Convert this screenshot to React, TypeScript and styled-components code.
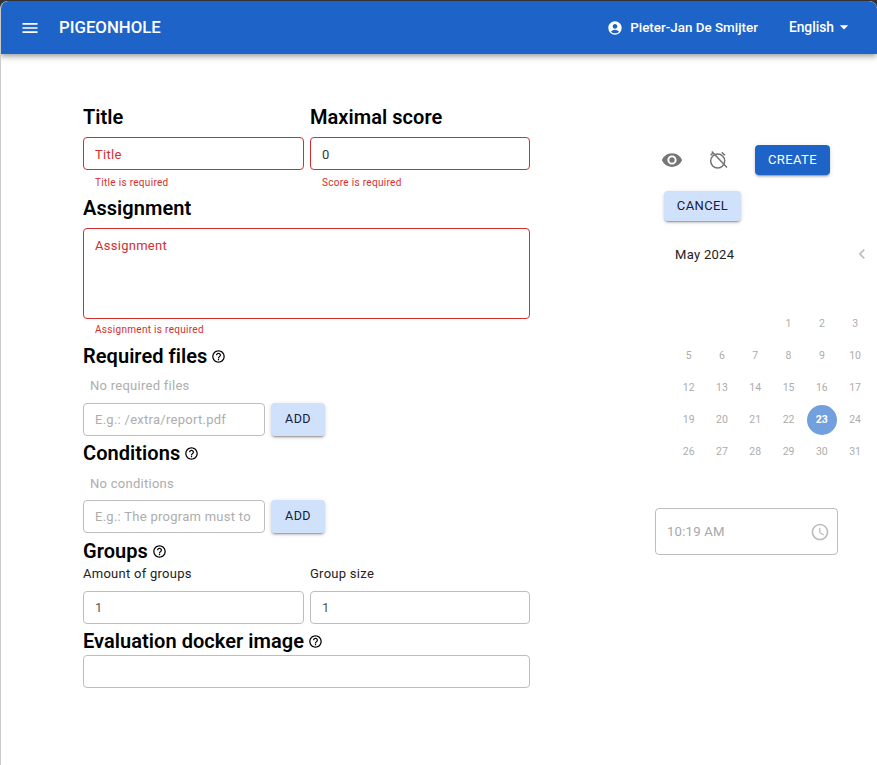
import React from 'react';
import styled, { createGlobalStyle } from 'styled-components';
import {
    MdAccessTime,
    MdAccountCircle,
    MdArrowDropDown,
    MdChevronLeft,
    MdHelpOutline,
    MdMenu,
    MdVisibility,
} from 'react-icons/md';

const GlobalStyle = createGlobalStyle`
    html, body {
        margin: 0;
        height: 100%;
        overflow: hidden;
        background: #333;
    }
    body, input, textarea, button {
        font-family: Roboto, "Liberation Sans", sans-serif;
    }
    * {
        box-sizing: border-box;
    }
`;

const Screen = styled.div`
    height: 765px;
    width: 877px;
    padding-top: 1px;
    overflow: hidden;
`;

const Page = styled.div`
    height: 764px;
    background: #fff;
    border-left: 1px solid #ccc;
    border-radius: 8px 8px 0 0;
    overflow: hidden;
`;

const Toolbar = styled.header`
    height: 53px;
    margin-left: -1px;
    background: #1e64c8;
    color: #fff;
    display: flex;
    align-items: center;
    padding: 0 23px 0 20px;
    border-radius: 8px 8px 0 0;
    box-shadow: 0 2px 4px -1px rgba(0, 0, 0, 0.2), 0 4px 5px rgba(0, 0, 0, 0.14), 0 1px 10px rgba(0, 0, 0, 0.12);
    position: relative;
`;

const Brand = styled.div`
    margin-left: 19px;
    padding-bottom: 1px;
    font-size: 16.8px;
    font-weight: 500;
    flex: 1;
`;

const UserName = styled.div`
    display: flex;
    align-items: center;
    gap: 7px;
    font-size: 13.4px;
    font-weight: 500;
`;

const LanguageButton = styled.div`
    display: flex;
    align-items: center;
    margin-left: 31px;
    padding-bottom: 1px;
    font-size: 13.8px;
    font-weight: 500;
`;

const Content = styled.main`
    display: flex;
    padding-left: 82px;
`;

const FormColumn = styled.form`
    width: 447px;
    padding-top: 50px;
    flex: none;
`;

const SideColumn = styled.aside`
    margin-left: 125px;
    padding-top: 91px;
    width: 240px;
    flex: none;
`;

const TwoColumns = styled.div`
    display: grid;
    grid-template-columns: 221px 220px;
    gap: 6px;
`;

const Heading = styled.h2`
    margin: 0;
    display: flex;
    align-items: center;
    gap: 4px;
    height: 26px;
    font-size: 20px;
    font-weight: 600;
    letter-spacing: 0.05px;
    color: #000;
`;

const GroupsSection = styled.section`
    margin-top: 1px;
`;

const Field = styled.div<{ $invalid?: boolean; $tall?: boolean }>`
    height: ${(p) => (p.$tall ? '91px' : '33px')};
    margin-top: 7px;
    border: 1px solid ${(p) => (p.$invalid ? '#d32f2f' : '#bdbdbd')};
    border-radius: 4px;
    padding: ${(p) => (p.$tall ? '9px 11px' : p.$invalid ? '3px 11px 0' : '1px 11px 0')};
    display: flex;
    align-items: ${(p) => (p.$tall ? 'flex-start' : 'center')};
    font-size: 13px;
    letter-spacing: 0.27px;
    line-height: 16px;
    background: #fff;
`;

const DockerField = styled(Field)`
    margin-top: 1px;
`;

const FieldText = styled.span<{ $tone: 'error' | 'value' | 'hint' | 'count' }>`
    color: ${(p) => ({ error: '#d32f2f', value: '#333', count: '#555', hint: '#adadad' }[p.$tone])};
`;

const HelperText = styled.div`
    height: 25px;
    padding: 7px 12px 0;
    font-size: 10px;
    line-height: 12px;
    letter-spacing: 0.3px;
    color: #d32f2f;
`;

const AssignmentHelper = styled(HelperText)`
    height: 24px;
    padding-top: 5px;
`;

const EmptyNote = styled.div<{ $top: number }>`
    height: 34px;
    padding: ${(p) => p.$top}px 7px 0;
    font-size: 13px;
    line-height: 16px;
    letter-spacing: 0.27px;
    color: #adadad;
`;

const AddRow = styled.div`
    display: flex;
    gap: 6px;
    align-items: flex-start;
    height: 37px;

    & > ${Field} {
        width: 182px;
        margin-top: 0;
    }
`;

const Button = styled.button<{ $primary?: boolean }>`
    border: 0;
    height: 30px;
    padding: 0 0 2px;
    border-radius: 4px;
    font-size: 12.5px;
    font-weight: 400;
    letter-spacing: 0.4px;
    background: ${(p) => (p.$primary ? '#1e64c8' : '#d0e1fb')};
    color: ${(p) => (p.$primary ? '#fff' : '#16203a')};
    box-shadow: 0 3px 1px -2px rgba(0, 0, 0, 0.2), 0 2px 2px rgba(0, 0, 0, 0.14), 0 1px 5px rgba(0, 0, 0, 0.12);
    white-space: nowrap;
`;

const AddButton = styled(Button)`
    height: 33px;
    width: 54px;
`;

const GroupLabel = styled.div`
    height: 20px;
    padding-top: 2px;
    font-size: 13px;
    line-height: 16px;
    letter-spacing: 0.27px;
    color: #222;
`;

const GroupCell = styled.div`
    padding-bottom: 4px;
`;

const Actions = styled.div`
    display: flex;
    flex-wrap: wrap;
    align-items: center;
    width: 190px;
    margin-left: -6px;
`;

const IconSlot = styled.div`
    width: 46px;
    height: 30px;
    display: flex;
    align-items: center;
    justify-content: center;
    color: #757575;
    font-size: 22px;
`;

const CreateButton = styled(Button)`
    margin-left: 14px;
    width: 75px;
    font-size: 13px;
`;

const CancelButton = styled(Button)`
    margin: 16px 0 0 15px;
    width: 77px;
    font-size: 13px;
`;

const MonthHeader = styled.div`
    display: flex;
    justify-content: space-between;
    align-items: center;
    margin-top: 23px;
    height: 20px;
    padding-left: 20px;
    font-size: 13px;
    letter-spacing: 0.3px;
    color: #222;
`;

const MonthBack = styled.span`
    color: #bdbdbd;
    font-size: 20px;
    display: flex;
    margin-right: 23px;
`;

const DayGrid = styled.div`
    display: grid;
    grid-template-columns: repeat(6, 33.3px);
    grid-auto-rows: 31.8px;
    margin: 45px 0 0 17px;
    width: 200px;
`;

const Day = styled.div<{ $selected?: boolean }>`
    display: flex;
    align-items: center;
    justify-content: center;
    justify-self: center;
    align-self: center;
    padding-bottom: 2px;
    font-size: 10.5px;
    color: ${(p) => (p.$selected ? '#fff' : '#adadad')};
    font-weight: ${(p) => (p.$selected ? 700 : 400)};
    background: ${(p) => (p.$selected ? '#729fde' : 'transparent')};
    border-radius: 50%;
    width: 30px;
    height: 30px;
`;

const TimeField = styled.div`
    margin-top: 40px;
    height: 47px;
    width: 183px;
    border: 1px solid #bdbdbd;
    border-radius: 4px;
    display: flex;
    align-items: center;
    justify-content: space-between;
    padding: 1px 7px 0 11px;
    font-size: 13.2px;
    letter-spacing: 0.2px;
    color: #a8a8a8;
`;

const TimeIcon = styled.span`
    display: flex;
    font-size: 20px;
    color: #bdbdbd;
`;

// the Saturday column falls outside the window in the picture
const weeks: (number | null)[][] = [
    [null, null, null, 1, 2, 3],
    [5, 6, 7, 8, 9, 10],
    [12, 13, 14, 15, 16, 17],
    [19, 20, 21, 22, 23, 24],
    [26, 27, 28, 29, 30, 31],
];

const SectionTitle = ({ title }: { title: string }): JSX.Element => (
    <Heading>
        {title}
        <MdHelpOutline size={15} />
    </Heading>
);

// the icon packages draw this one with a broken ring, the picture has a whole one
const AlarmOffIcon = (): JSX.Element => (
    <svg width="22" height="22" viewBox="0 0 22 22" fill="none" stroke="currentColor" strokeWidth="1.5">
        <circle cx="10.7" cy="12" r="7" />
        <path d="M3.6 6.2 L6.6 3.4 M14.8 3.4 L18 6.2 M4.8 2.6 L20 18.6" />
    </svg>
);

const App = (): JSX.Element => (
    <Screen>
        <GlobalStyle />
        <Page>
            <Toolbar>
                <MdMenu size={20} />
                <Brand>PIGEONHOLE</Brand>
                <UserName>
                    <MdAccountCircle size={16} />
                    Pieter-Jan De Smijter
                </UserName>
                <LanguageButton>
                    English
                    <MdArrowDropDown size={20} />
                </LanguageButton>
            </Toolbar>
            <Content>
                <FormColumn>
                    <TwoColumns>
                        <div>
                            <Heading>Title</Heading>
                            <Field $invalid>
                                <FieldText $tone="error">Title</FieldText>
                            </Field>
                            <HelperText>Title is required</HelperText>
                        </div>
                        <div>
                            <Heading>Maximal score</Heading>
                            <Field $invalid>
                                <FieldText $tone="value">0</FieldText>
                            </Field>
                            <HelperText>Score is required</HelperText>
                        </div>
                    </TwoColumns>
                    <Heading>Assignment</Heading>
                    <Field $invalid $tall>
                        <FieldText $tone="error">Assignment</FieldText>
                    </Field>
                    <AssignmentHelper>Assignment is required</AssignmentHelper>
                    <SectionTitle title="Required files" />
                    <EmptyNote $top={9}>No required files</EmptyNote>
                    <AddRow>
                        <Field>
                            <FieldText $tone="hint">E.g.: /extra/report.pdf</FieldText>
                        </Field>
                        <AddButton type="button">ADD</AddButton>
                    </AddRow>
                    <SectionTitle title="Conditions" />
                    <EmptyNote $top={10}>No conditions</EmptyNote>
                    <AddRow>
                        <Field>
                            <FieldText $tone="hint">E.g.: The program must to</FieldText>
                        </Field>
                        <AddButton type="button">ADD</AddButton>
                    </AddRow>
                    <GroupsSection>
                        <SectionTitle title="Groups" />
                        <TwoColumns>
                            <GroupCell>
                                <GroupLabel>Amount of groups</GroupLabel>
                                <Field>
                                    <FieldText $tone="count">1</FieldText>
                                </Field>
                            </GroupCell>
                            <GroupCell>
                                <GroupLabel>Group size</GroupLabel>
                                <Field>
                                    <FieldText $tone="count">1</FieldText>
                                </Field>
                            </GroupCell>
                        </TwoColumns>
                    </GroupsSection>
                    <SectionTitle title="Evaluation docker image" />
                    <DockerField />
                </FormColumn>
                <SideColumn>
                    <Actions>
                        <IconSlot>
                            <MdVisibility />
                        </IconSlot>
                        <IconSlot>
                            <AlarmOffIcon />
                        </IconSlot>
                        <CreateButton type="button" $primary>CREATE</CreateButton>
                        <CancelButton type="button">CANCEL</CancelButton>
                    </Actions>
                    <MonthHeader>
                        May 2024
                        <MonthBack>
                            <MdChevronLeft />
                        </MonthBack>
                    </MonthHeader>
                    <DayGrid>
                        {weeks.flat().map((day, index) => (
                            <Day key={index} $selected={day === 23}>{day}</Day>
                        ))}
                    </DayGrid>
                    <TimeField>
                        10:19 AM
                        <TimeIcon>
                            <MdAccessTime />
                        </TimeIcon>
                    </TimeField>
                </SideColumn>
            </Content>
        </Page>
    </Screen>
);

export default App;
